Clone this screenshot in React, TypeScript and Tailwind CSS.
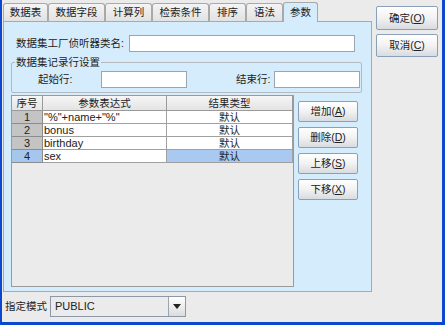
import type { ReactNode } from 'react'

const tabs = [
  { label: '数据表', w: 'w-[45px]' },
  { label: '数据字段', w: 'w-[57px]' },
  { label: '计算列', w: 'w-[47px]' },
  { label: '检索条件', w: 'w-[57px]' },
  { label: '排序', w: 'w-[37px]' },
  { label: '语法', w: 'w-[37px]' },
]

const rows = ['"%"+name+"%"', 'bonus', 'birthday', 'sex']

function Btn({ children, className = '' }: { children: ReactNode; className?: string }) {
  return (
    <div
      className={`flex items-center justify-center whitespace-nowrap rounded-[2px] border border-[#8aa0b8] bg-gradient-to-b from-white via-[#f2f2f2] to-[#d8dbe0] text-[#222] ${className}`}
    >
      {children}
    </div>
  )
}

function Input({ className = '' }: { className?: string }) {
  return <div className={`h-[17px] border border-[#9aa5b1] bg-white ${className}`} />
}

export default function App() {
  return (
    <div
      className="flex h-[325px] w-[445px] flex-col overflow-hidden border-b-[3px] border-l-[2px] border-r-[3px] border-[#0b47d1] bg-[#ebebeb] text-[10.5px] leading-[13px] text-[#222]"
      style={{ fontFamily: '"Liberation Sans", "Noto Sans CJK SC", sans-serif' }}
    >
      <div className="flex">
        {/* left: tabs + panel */}
        <div className="ml-[1px] flex w-[369px] flex-col pt-[3px]">
          <div className="flex h-[18px] items-end">
            {tabs.map((t) => (
              <div
                key={t.label}
                className={`${t.w} flex h-[18px] items-center justify-center whitespace-nowrap rounded-t-[3px] border border-b-0 border-[#a9a9a9] bg-gradient-to-b from-[#f4f4f4] to-[#e2e2e2]`}
              >
                {t.label}
              </div>
            ))}
            <div className="relative z-10 -mb-[1px] flex h-[20px] w-[35px] items-center justify-center rounded-t-[3px] border border-b-0 border-[#a9a9a9] bg-[#d5ecfc]">
              参数
            </div>
          </div>
          <div className="flex h-[271px] flex-col border border-[#a9a9a9] bg-[#d5ecfc] pl-[7px] pr-[10px]">
            <div className="mt-[13px] flex items-center">
              <span className="ml-[5px] w-[113px] whitespace-nowrap">数据集工厂侦听器类名:</span>
              <Input className="w-[226px]" />
            </div>
            <div className="relative mt-[10px] h-[31px] w-[351px] rounded-[2px] border border-[#b5b9bd]">
              <span className="absolute -top-[7px] left-[3px] bg-[#d5ecfc] px-[1px] whitespace-nowrap">数据集记录行设置</span>
              <div className="mt-[8px] flex items-center">
                <span className="ml-[26px] w-[63px] whitespace-nowrap">起始行:</span>
                <Input className="w-[86px]" />
                <span className="ml-[49px] w-[38px] whitespace-nowrap">结束行:</span>
                <Input className="w-[86px]" />
              </div>
            </div>
            <div className="mt-[2px] flex">
              <div className="flex h-[192px] w-[283px] flex-col border border-[#9a9a9a] bg-[#ebebeb]">
                <div className="flex h-[15px] border-b border-[#9a9a9a] bg-gradient-to-b from-[#f6f6f6] to-[#e4e4e4]">
                  <div className="flex w-[31px] items-center justify-center border-r border-[#9a9a9a]">序号</div>
                  <div className="flex w-[124px] items-center justify-center border-r border-[#9a9a9a]">参数表达式</div>
                  <div className="flex flex-1 items-center justify-center border-r border-[#9a9a9a]">结果类型</div>
                </div>
                {rows.map((r, i) => {
                  const sel = i === rows.length - 1
                  return (
                    <div key={r} className="flex h-[13px] leading-[12px]">
                      <div
                        className={`flex w-[31px] items-center justify-center border-b border-r border-[#8c8c8c] text-[11px] ${
                          sel ? 'bg-[#a5c7ee]' : 'bg-[#c4c4c4]'
                        }`}
                      >
                        {i + 1}
                      </div>
                      <div className="flex w-[124px] items-center border-b border-r border-[#a0a0a0] bg-white pl-[1px] text-[11px]">{r}</div>
                      <div
                        className={`flex flex-1 items-center justify-center border-b border-r border-[#a0a0a0] ${
                          sel ? 'bg-[#a9c9f0]' : 'bg-white'
                        }`}
                      >
                        默认
                      </div>
                    </div>
                  )
                })}
              </div>
              <div className="ml-[4px] mt-[6px] flex flex-col gap-[5px]">
                <Btn className="h-[21px] w-[60px]">增加(<span className="underline">A</span>)</Btn>
                <Btn className="h-[21px] w-[60px]">删除(<span className="underline">D</span>)</Btn>
                <Btn className="h-[21px] w-[60px]">上移(<span className="underline">S</span>)</Btn>
                <Btn className="h-[21px] w-[60px]">下移(<span className="underline">X</span>)</Btn>
              </div>
            </div>
          </div>
        </div>
        {/* right: dialog buttons */}
        <div className="ml-[4px] mt-[6px] flex flex-col gap-[4px]">
          <Btn className="h-[24px] w-[62px]">确定(<span className="underline">O</span>)</Btn>
          <Btn className="h-[23px] w-[62px]">取消(<span className="underline">C</span>)</Btn>
        </div>
      </div>
      <div className="mt-[4px] flex items-center">
        <span className="ml-[3px] w-[45px] whitespace-nowrap">指定模式</span>
        <div className="flex h-[21px] w-[136px] border border-[#8a98a8] bg-[#ebebeb]">
          <div className="flex flex-1 items-center pl-[4px] text-[11px]">PUBLIC</div>
          <div className="flex w-[17px] items-center justify-center border-l border-[#9aa5b1] bg-gradient-to-b from-white to-[#dcdcdc]">
            <svg width="8" height="5" viewBox="0 0 8 5">
              <path d="M0 0h8L4 5z" fill="#222" />
            </svg>
          </div>
        </div>
      </div>
    </div>
  )
}
